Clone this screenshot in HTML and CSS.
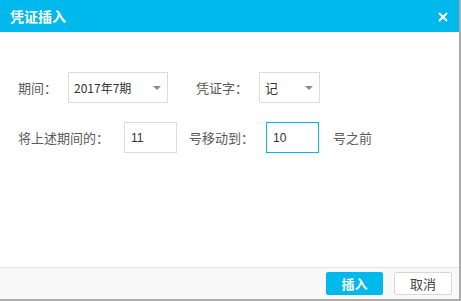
FILE: index.html
```html
<!DOCTYPE html>
<html>
<head>
<meta charset="utf-8">
<link rel="stylesheet" href="styles.css">
</head>
<body>
    <div class="dialog">
        <div class="dialog-title">
            <span>凭证插入</span>
            <span class="close">
                <svg width="10" height="10" viewBox="0 0 10 10"><path d="M1 1L9 9M9 1L1 9" stroke="#fff" stroke-width="2"/></svg>
            </span>
        </div>

        <div class="dialog-body">
            <div class="row">
                <span class="label label-period">期间：</span>
                <div class="select select-period">
                    <span>2017年7期</span>
                    <span class="arrow"></span>
                </div>
                <span class="label label-word">凭证字：</span>
                <div class="select select-word">
                    <span class="word">记</span>
                    <span class="arrow"></span>
                </div>
            </div>
            <div class="row">
                <span class="label label-from">将上述期间的：</span>
                <input class="num" type="text" value="11" />
                <span class="label label-to">号移动到：</span>
                <input class="num num-focus" type="text" value="10" />
                <span class="label label-end">号之前</span>
            </div>
        </div>

        <div class="dialog-footer">
            <button class="btn btn-primary">插入</button>
            <button class="btn">取消</button>
        </div>
    </div>
</body>
</html>
```

FILE: styles.css
```css
body {
    margin: 0;
    background-color: #fff;
    font-family: "Noto Sans CJK SC", "Liberation Sans", sans-serif;
    color: #5a5a5a;
}

.dialog {
    width: 459px;
    height: 299px;
    border-right: 2px solid #ababab;
    border-bottom: 2px solid #ababab;
    display: flex;
    flex-direction: column;
}

.dialog-title {
    height: 32px;
    background-color: #00b9ec;
    color: #fff;
    font-size: 14px;
    font-weight: bold;
    display: flex;
    align-items: center;
    justify-content: space-between;
    padding: 0 11px 0 10px;
}

.close {
    display: flex;
    margin-top: 1px;
}

.dialog-body {
    flex: 1;
    padding: 40px 0 0 18px;
}

.row {
    display: flex;
    align-items: center;
    height: 31px;
    margin-bottom: 19px;
    font-size: 13px;
}

.label-period {
    width: 50px;
}

.label-word {
    margin-left: 28px;
    width: 63px;
}

.label-from {
    width: 106px;
}

.label-to {
    margin-left: 12px;
    width: 77px;
}

.label-end {
    margin-left: 14px;
}

.select {
    box-sizing: border-box;
    height: 31px;
    border: 1px solid #dcdcdc;
    display: flex;
    align-items: center;
    justify-content: space-between;
    padding: 0 6px 0 5px;
    font-size: 12px;
    color: #333;
}

.select-period {
    width: 100px;
}

.select-word {
    width: 61px;
}

.select .word {
    font-size: 13px;
}

.arrow {
    width: 0;
    height: 0;
    border-left: 4px solid transparent;
    border-right: 4px solid transparent;
    border-top: 4px solid #888;
}

.num {
    box-sizing: border-box;
    width: 53px;
    height: 31px;
    border: 1px solid #dcdcdc;
    padding: 0 6px;
    font-family: "Liberation Sans", sans-serif;
    font-size: 12px;
    color: #333;
    outline: none;
}

.num-focus {
    border-color: #00b9ec;
}

.dialog-footer {
    height: 31px;
    border-top: 1px solid #e3e3e3;
    background-color: #f9f9f9;
    display: flex;
    align-items: center;
    justify-content: flex-end;
    padding-right: 7px;
}

.btn {
    box-sizing: border-box;
    width: 58px;
    height: 23px;
    margin-left: 11px;
    border: 1px solid #d5d9de;
    border-radius: 2px;
    background-color: #fff;
    color: #444;
    font-family: "Noto Sans CJK SC", sans-serif;
    font-size: 13px;
    padding: 0;
    cursor: pointer;
}

.btn-primary {
    width: 57px;
    background-color: #00b9ec;
    border-color: #00b9ec;
    color: #fff;
    font-weight: bold;
}
```
